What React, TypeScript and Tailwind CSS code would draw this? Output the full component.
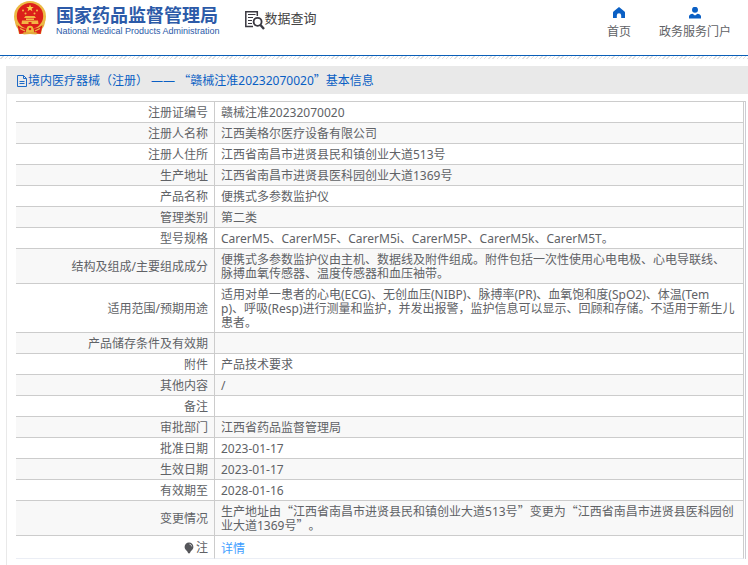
import React from 'react';
import { clsx } from 'clsx';

interface DetailRow {
  label: string;
  value: string;
}

const rows: DetailRow[] = [
  { label: '注册证编号', value: '赣械注准20232070020' },
  { label: '注册人名称', value: '江西美格尔医疗设备有限公司' },
  { label: '注册人住所', value: '江西省南昌市进贤县民和镇创业大道513号' },
  { label: '生产地址', value: '江西省南昌市进贤县医科园创业大道1369号' },
  { label: '产品名称', value: '便携式多参数监护仪' },
  { label: '管理类别', value: '第二类' },
  { label: '型号规格', value: 'CarerM5、CarerM5F、CarerM5i、CarerM5P、CarerM5k、CarerM5T。' },
  {
    label: '结构及组成/主要组成成分',
    value: '便携式多参数监护仪由主机、数据线及附件组成。附件包括一次性使用心电电极、心电导联线、\n脉搏血氧传感器、温度传感器和血压袖带。',
  },
  {
    label: '适用范围/预期用途',
    value: '适用对单一患者的心电(ECG)、无创血压(NIBP)、脉搏率(PR)、血氧饱和度(SpO2)、体温(Tem\np)、呼吸(Resp)进行测量和监护，并发出报警，监护信息可以显示、回顾和存储。不适用于新生儿患者。',
  },
  { label: '产品储存条件及有效期', value: '' },
  { label: '附件', value: '产品技术要求' },
  { label: '其他内容', value: '/' },
  { label: '备注', value: '' },
  { label: '审批部门', value: '江西省药品监督管理局' },
  { label: '批准日期', value: '2023-01-17' },
  { label: '生效日期', value: '2023-01-17' },
  { label: '有效期至', value: '2028-01-16' },
  {
    label: '变更情况',
    value: '生产地址由“江西省南昌市进贤县民和镇创业大道513号”变更为“江西省南昌市进贤县医科园创业大道1369号”。',
  },
];

// Curly quotes take the full-width CJK form, the rest keeps the Latin face
function CjkText({ text }: { text: string }) {
  return (
    <>
      {text.split(/([“”])/).map((part, idx) =>
        part === '“' || part === '”' ? (
          <span key={idx} className="font-['Noto_Sans_CJK_SC',sans-serif] leading-none">{part}</span>
        ) : (
          part
        )
      )}
    </>
  );
}

function Emblem() {
  return (
    <svg viewBox="0 0 32 34" className="w-8 h-[34px]" aria-hidden="true">
      <path d="M1 19h30c0 4-1 7-3 9l-1 5H5l-1-5c-2-2-3-5-3-9z" fill="#e3a93a" />
      <ellipse cx="16" cy="15.5" rx="16" ry="15.5" fill="#ecb944" />
      <ellipse cx="16" cy="15" rx="13.2" ry="13" fill="#dc1f1a" />
      <path d="M16 3.500l1 2.500h2.700l-2.100 1.700.8 2.600-2.400-1.500-2.400 1.500.8-2.600L12.300 6H15z" fill="#f8d44c" />
      <g fill="#f3b545">
        <circle cx="9" cy="9.500" r="1" />
        <circle cx="11.500" cy="12.500" r="1" />
        <circle cx="20.500" cy="12.500" r="1" />
        <circle cx="23" cy="9.500" r="1" />
        <path d="M11.500 15h9l1.500 2H10zM12 17.500h8v1.500h-8zM8 19.500h16l.5 3.500h-17z" />
      </g>
      <path d="M14.500 21h3v2h-3z" fill="#dc1f1a" />
      <path d="M3.500 24c2.500 2.500 5.500 3.500 9 3.500l-1 4.500-6 1zM28.500 24c-2.500 2.500-5.500 3.500-9 3.500l1 4.500 6 1z" fill="#dc1f1a" />
      <path d="M6 27.500l5 2.500M26 27.500l-5 2.500" stroke="#ecb944" strokeWidth="1.200" />
      <circle cx="16" cy="28" r="3.200" fill="#f0bd3d" />
      <circle cx="16" cy="28" r="1.300" fill="#dc1f1a" />
      <path d="M9.500 31l6.500 1 6.500-1v2.500l-6.500-.5-6.500.5z" fill="#e3a93a" />
    </svg>
  );
}

function SearchDocIcon() {
  return (
    <svg viewBox="0 0 20 20" className="mt-0.5 w-5 h-5" fill="none" stroke="#3a3840" aria-hidden="true">
      <path d="M12.300 6V1.800H.8v14.700H8" strokeWidth="1.500" />
      <path d="M3 4.500h7.500M3 7.500h5M3 10.500h4M3 13.500h4" strokeWidth="1.200" />
      <circle cx="12.600" cy="11.800" r="4" strokeWidth="1.800" />
      <path d="M15.500 15l3.500 4" strokeWidth="2.400" />
    </svg>
  );
}

function HomeIcon() {
  return (
    <svg viewBox="0 0 12 12" className="w-3 h-3" fill="#0a5fc4" aria-hidden="true">
      <path d="M6 0L11.500 4.500Q12 5 12 5.800V11H8.200V8.500a2.200 2.200 0 0 0-4.400 0V11H0V5.800Q0 5 .5 4.500z" />
    </svg>
  );
}

function UserIcon() {
  return (
    <svg viewBox="0 0 12 12" className="w-3 h-3" fill="#0a5fc4" aria-hidden="true">
      <circle cx="6" cy="2.800" r="3" />
      <path d="M0 11.500V9.300C.3 7.500 1.800 6.900 3.500 6.700L6 8.500l2.500-1.800c1.700.2 3.200.8 3.500 2.600v2.200z" />
    </svg>
  );
}

function DocIcon() {
  return (
    <svg viewBox="0 0 11 12" className="w-[11px] h-3" fill="none" stroke="#1d6ac6" aria-hidden="true">
      <path d="M.5.5h6l3 3v8h-9zM6.500.5v3h3M2.500 6.500h5M2.500 8.500h5" />
    </svg>
  );
}

function BulbIcon() {
  return (
    <svg viewBox="0 0 11 12" className="w-[11px] h-3" aria-hidden="true">
      <path d="M5 .5a4.400 4.400 0 0 1 4.400 4.400c0 1.900-1.200 2.800-2.400 4.100H3C1.800 7.700.6 6.800.6 4.900A4.400 4.400 0 0 1 5 .5z" fill="#55565a" />
      <path d="M3.300 9h3.400v1.200H6v1H4v-1h-.7z" fill="#55565a" />
      <path d="M5.500 2.200c1.200.2 2 1 2.200 2.200" stroke="#fff" strokeWidth=".8" fill="none" />
    </svg>
  );
}

const labelCell =
  'w-[199px] border-r border-b border-r-[#ccc] pr-1.5 text-right align-middle font-normal';
const valueCell = 'border-r border-b border-r-[#ccc] pl-1.5 pr-1 align-middle';

export default function App() {
  return (
    <div className="min-h-screen bg-white font-['Noto_Sans','Noto_Sans_CJK_SC',sans-serif] text-xs text-[#606266] [text-spacing-trim:space-all]">
      <header>
        <div className="flex h-[55px] items-start pl-3.5 pr-[17px]">
          <a href="#" className="flex items-start pt-px">
            <Emblem />
            <span className="ml-2.5 flex flex-col pt-1 text-[#2c5aa8]">
              <span className="text-lg leading-5 font-bold">国家药品监督管理局</span>
              <span className="font-['Liberation_Sans',sans-serif] text-[9px] leading-3 whitespace-nowrap">
                National Medical Products Administration
              </span>
            </span>
          </a>
          <a href="#" className="ml-[25px] flex items-start pt-2 text-[13px] leading-5 text-[#444]">
            <SearchDocIcon />
            数据查询
          </a>
          <nav className="ml-auto flex gap-7 pt-[7px]">
            <a href="#" className="flex flex-col items-center gap-1">
              <HomeIcon />
              <span className="leading-[18px]">首页</span>
            </a>
            <a href="#" className="flex flex-col items-center gap-1">
              <UserIcon />
              <span className="leading-[18px]">政务服务门户</span>
            </a>
          </nav>
        </div>
        <div className="h-px bg-[#0a5fb8]"></div>
        <div className="h-[3px] bg-[repeating-linear-gradient(135deg,#fff_0px,#fff_2px,#e0e0e0_2px,#e0e0e0_3px)]"></div>
      </header>

      <main className="mt-[7px] ml-1.5">
        <h1 className="flex h-7 items-center bg-[#e9e9e9] pt-0.5 pl-[11px] text-xs text-[#0a5fc4]">
          <DocIcon />
          <span>
            <CjkText text="境内医疗器械（注册） —— “赣械注准20232070020”基本信息" />
          </span>
        </h1>
        <div className="border-l border-[#e9e9e9] pt-[7px] pb-1.5 pl-[9px] pr-0.5">
          <div className="border-t border-r border-t-[#ccc] border-r-[#ccccd4] pr-px">
            <table className="w-full border-separate border-spacing-0 leading-[14px]">
              <tbody>
                {rows.map((row, idx) => (
                  <tr key={row.label} className={clsx(idx % 2 === 1 && 'bg-[#f8f8f8]')}>
                    <th scope="row" className={clsx(labelCell, 'border-b-[#ccc] pt-1 pb-0.5')}>
                      {row.label}
                    </th>
                    <td className={clsx(valueCell, 'h-[21px] border-b-[#ccc] pt-1 pb-0.5 break-all whitespace-pre-line')}>
                      <CjkText text={row.value} />
                    </td>
                  </tr>
                ))}
                <tr>
                  <th scope="row" className={clsx(labelCell, 'border-b-[#ebeef5] pt-[5px] pb-[3px]')}>
                    <span className="flex items-center justify-end gap-px">
                      <BulbIcon />注
                    </span>
                  </th>
                  <td className={clsx(valueCell, 'border-b-[#ebeef5] pt-1.5 pb-0.5')}>
                    <a href="#" className="text-[#409eff]">详情</a>
                  </td>
                </tr>
              </tbody>
            </table>
          </div>
        </div>
      </main>
    </div>
  );
}
